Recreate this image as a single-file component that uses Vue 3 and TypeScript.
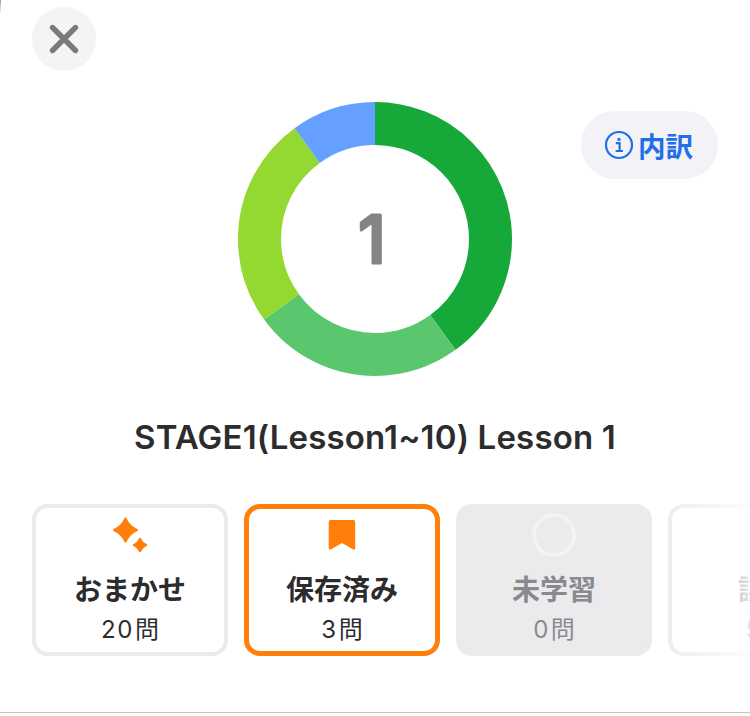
<script setup lang="ts">
interface Slice { color: string; value: number; offset: number }
interface Card { key: string; label: string; num: string; state: string }

const raw: Array<[string, number]> = [
  ['#16a838', 40],
  ['#5ac76e', 25],
  ['#93d932', 25],
  ['#659fff', 10],
]
let acc = 0
const slices: Slice[] = raw.map(([color, value]) => {
  const s = { color, value, offset: -acc }
  acc += value
  return s
})

const cards: Card[] = [
  { key: 'auto', label: 'おまかせ', num: '20', state: 'normal' },
  { key: 'saved', label: '保存済み', num: '3', state: 'selected' },
  { key: 'new', label: '未学習', num: '0', state: 'disabled' },
  { key: 'wrong', label: '誤答', num: '5', state: 'normal' },
]
</script>

<template>
  <div class="screen">
    <div class="corner-mark"></div>
    <button class="close" aria-label="閉じる">
      <svg width="64" height="64" viewBox="0 0 64 64">
        <path d="M20.5 20.5 L43.5 43.5 M43.5 20.5 L20.5 43.5" stroke="#7b7b7d" stroke-width="5.4" stroke-linecap="round" fill="none" />
      </svg>
    </button>

    <section class="chart">
      <svg class="donut" width="274" height="274" viewBox="0 0 274 274">
        <g transform="rotate(-90 137 137)">
          <circle
            v-for="s in slices"
            :key="s.color"
            cx="137"
            cy="137"
            r="115.5"
            fill="none"
            :stroke="s.color"
            stroke-width="43"
            pathLength="100"
            :stroke-dasharray="`${s.value} ${100 - s.value}`"
            :stroke-dashoffset="s.offset"
          />
        </g>
        <text class="donut-num" x="134" y="161" text-anchor="middle">1</text>
      </svg>
      <button class="info">
        <svg width="30" height="30" viewBox="0 0 30 30">
          <circle cx="15" cy="15" r="13" fill="none" stroke="#1f6fe8" stroke-width="2.2" />
          <circle cx="15" cy="9.4" r="1.7" fill="#1f6fe8" />
          <path d="M11.8 13.2 H15.6 V20.6 M11.6 21 H19" fill="none" stroke="#1f6fe8" stroke-width="2.2" />
        </svg>
        <span>内訳</span>
      </button>
    </section>

    <h1 class="title">STAGE1(Lesson1~10) Lesson 1</h1>

    <div class="row">
      <div v-for="c in cards" :key="c.key" class="card" :class="c.state">
        <div class="icon">
          <svg v-if="c.key === 'auto'" width="44" height="44" viewBox="0 0 44 44">
            <path d="M17.5 5.5 Q21 13.5 29 17 Q21 20.5 17.5 28.5 Q14 20.5 6 17 Q14 13.5 17.5 5.5 Z" fill="#ff7f0a" stroke="#ff7f0a" stroke-width="2" stroke-linejoin="round" />
            <path d="M32 25.4 Q34 30 38.6 32 Q34 34 32 38.6 Q30 34 25.4 32 Q30 30 32 25.4 Z" fill="#ff7f0a" stroke="#ff7f0a" stroke-width="1.4" stroke-linejoin="round" />
          </svg>
          <svg v-else-if="c.key === 'saved'" width="44" height="44" viewBox="0 0 44 44">
            <path d="M8.7 9 Q8.7 7 10.7 7 H33.7 Q35.2 7 35.2 9 V35 Q35.2 37.4 32.8 36.2 L22 30 L11.1 36.2 Q8.7 37.4 8.7 35 Z" fill="#ff7f0a" />
          </svg>
          <svg v-else-if="c.key === 'new'" width="44" height="44" viewBox="0 0 44 44">
            <circle cx="22" cy="22" r="20" fill="none" stroke="#f3f3f5" stroke-width="4" />
          </svg>
        </div>
        <div class="label">{{ c.label }}</div>
        <div class="count"><span class="num">{{ c.num }}</span>問</div>
      </div>
      <div class="fade"></div>
    </div>

    <div class="bottom-line"></div>
  </div>
</template>

<style>
html, body { margin: 0; background: #fff; }
</style>

<style scoped>
.screen {
  position: relative;
  width: 750px;
  height: 716px;
  overflow: hidden;
  background: #fff;
  display: flex;
  flex-direction: column;
  font-family: Inter, "Noto Sans CJK JP", sans-serif;
}
.corner-mark {
  position: absolute;
  left: 0;
  top: 0;
  width: 1px;
  height: 14px;
  background: linear-gradient(#9a9a9a, #fff);
}
.close {
  width: 64px;
  height: 64px;
  flex: none;
  margin: 7px 0 0 32px;
  padding: 0;
  border: 0;
  border-radius: 50%;
  background: #f4f4f4;
}
.close svg { display: block; }
.chart {
  position: relative;
  flex: none;
  height: 274px;
  margin-top: 31px;
  display: flex;
  justify-content: center;
}
.donut-num {
  font-family: Inter, sans-serif;
  font-size: 66px;
  font-weight: 500;
  fill: #848486;
  stroke: #848486;
  stroke-width: 3px;
  stroke-linejoin: round;
}
.info {
  position: absolute;
  left: 581px;
  top: 9px;
  width: 137px;
  height: 68px;
  padding: 0 0 0 23px;
  border: 0;
  border-radius: 34px;
  background: #f2f2f7;
  color: #1f6fe8;
  display: flex;
  align-items: center;
  gap: 4px;
  font-family: "Noto Sans CJK JP", sans-serif;
  font-size: 27.5px;
  font-weight: 700;
}
.title {
  margin: 41px 0 0;
  text-align: center;
  font-size: 33px;
  line-height: 40px;
  font-weight: 600;
  letter-spacing: 0.17px;
  color: #2c2c2e;
  white-space: nowrap;
}
.row {
  flex: none;
  display: flex;
  gap: 16px;
  margin-top: 47px;
  padding-left: 32px;
  position: relative;
}
.card {
  flex: none;
  box-sizing: border-box;
  width: 196px;
  height: 152px;
  border: 4px solid #ebebed;
  border-radius: 16px;
  padding-top: 5px;
  background: #fff;
  color: #2c2c2e;
  display: flex;
  flex-direction: column;
  align-items: center;
}
.card.selected { border: 5px solid #ff7f0a; padding-top: 4px; }
.card.disabled { background: #ebebed; color: #8a8a8e; }
.icon { width: 44px; height: 44px; flex: none; }
.icon svg { display: block; }
.label {
  margin-top: 15px;
  font-size: 28px;
  line-height: 36px;
  font-weight: 700;
  white-space: nowrap;
}
.count {
  margin-top: 7px;
  font-size: 24px;
  line-height: 30px;
  font-weight: 400;
  white-space: nowrap;
}
.num {
  letter-spacing: 1.5px;
  margin-right: 1px;
}
.fade {
  position: absolute;
  left: 655px;
  top: 0;
  width: 95px;
  height: 100%;
  background: linear-gradient(to right, rgba(255,255,255,0), rgba(255,255,255,0.88));
}
.bottom-line {
  position: absolute;
  left: 0;
  right: 0;
  top: 712px;
  height: 1px;
  background: #c4c4c4;
}
</style>
